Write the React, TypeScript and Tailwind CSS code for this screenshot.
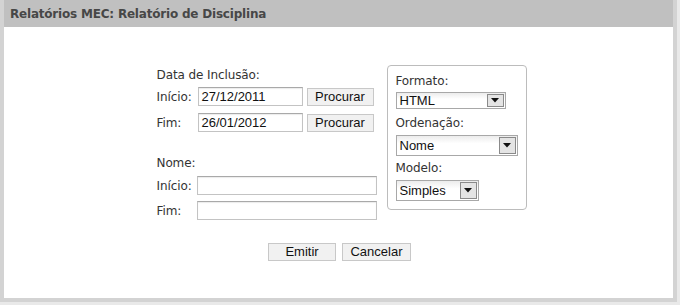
import React from "react";

const label = "font-['DejaVu_Sans',Verdana,sans-serif] text-[12px] tracking-[-0.1px] text-[#333]";
const arial = "font-['Liberation_Sans',Arial,sans-serif] text-[13px] text-[#111]";

function TextInput({ value, width }: { value?: string; width: string }) {
  return (
    <div
      className={`${width} h-[19px] border border-[#c3c3c3] border-t-[#a9a9a9] bg-white shadow-[inset_0_1px_1px_rgba(0,0,0,0.08)] px-[3px] leading-[17px] ${arial}`}
    >
      {value}
    </div>
  );
}

function Button({ text, width }: { text: string; width: string }) {
  return (
    <div
      className={`${width} h-[18px] border border-[#c8c8c8] bg-[#f1f1f1] flex items-center justify-center ${arial}`}
    >
      {text}
    </div>
  );
}

function Select({ value, width, height }: { value: string; width: string; height: string }) {
  return (
    <div
      className={`${width} ${height} border border-[#a8a8a8] bg-gradient-to-b from-[#ececec] to-white to-[40%] flex items-center justify-between pl-[3px] pr-[1px] ${arial}`}
    >
      <span>{value}</span>
      <span className="w-[17px] h-[calc(100%-2px)] border border-[#8a8a8a] bg-[#e4e4e4] flex items-center justify-center">
        <svg width="8" height="5" viewBox="0 0 8 5">
          <path d="M0 0h8L4 4.5z" fill="#111" />
        </svg>
      </span>
    </div>
  );
}

function Row({ name, children, className = "" }: { name: string; children: React.ReactNode; className?: string }) {
  return (
    <div className={`flex items-center ${className}`}>
      <div className={`w-[41px] ${label}`}>{name}</div>
      {children}
    </div>
  );
}

export default function App() {
  return (
    <div className="w-[680px] h-[305px] bg-[#e9e9e9] pr-[3px] pb-[3px] overflow-hidden">
      <div className="h-full flex flex-col border-x-4 border-b-4 border-[#d3d3d3] bg-white">
        <div className="h-[27px] bg-[#c0c0c0] pl-[6px] flex items-center font-['DejaVu_Sans',Verdana,sans-serif] font-bold text-[12px] tracking-[-0.2px] text-[#474747]">
          Relatórios MEC: Relatório de Disciplina
        </div>

        <div className="pt-[38px] flex flex-col items-center">
          <div className="flex items-start gap-[10px] pl-[6px]">
            <div className="w-[220px]">
              <div className={`h-[18px] leading-[18px] mt-[1px] ${label}`}>Data de Inclusão:</div>
              <Row name="Início:" className="mt-[3px]">
                <TextInput value="27/12/2011" width="w-[105px]" />
                <div className="ml-[4px]">
                  <Button text="Procurar" width="w-[67px]" />
                </div>
              </Row>
              <Row name="Fim:" className="mt-[7px]">
                <TextInput value="26/01/2012" width="w-[105px]" />
                <div className="ml-[4px]">
                  <Button text="Procurar" width="w-[67px]" />
                </div>
              </Row>
              <div className={`mt-[22px] h-[18px] leading-[18px] ${label}`}>Nome:</div>
              <Row name="Início:" className="mt-[4px]">
                <TextInput width="w-[180px]" />
              </Row>
              <Row name="Fim:" className="mt-[6px]">
                <TextInput width="w-[180px]" />
              </Row>
            </div>

            <div className="w-[140px] border border-[#bcbcbc] rounded-[4px] pl-[8px] pt-[6px] pb-[8px]">
              <div className={`h-[18px] leading-[18px] ${label}`}>Formato:</div>
              <div className="mt-[2px]">
                <Select value="HTML" width="w-[110px]" height="h-[17px]" />
              </div>
              <div className={`mt-[5px] h-[18px] leading-[18px] ${label}`}>Ordenação:</div>
              <div className="mt-[3px]">
                <Select value="Nome" width="w-[122px]" height="h-[21px]" />
              </div>
              <div className={`mt-[3px] h-[18px] leading-[18px] ${label}`}>Modelo:</div>
              <div className="mt-[3px]">
                <Select value="Simples" width="w-[83px]" height="h-[21px]" />
              </div>
            </div>
          </div>

          <div className="mt-[23px] flex gap-[6px] ml-[2px]">
            <Button text="Emitir" width="w-[68px]" />
            <Button text="Cancelar" width="w-[69px]" />
          </div>
        </div>
      </div>
    </div>
  );
}
